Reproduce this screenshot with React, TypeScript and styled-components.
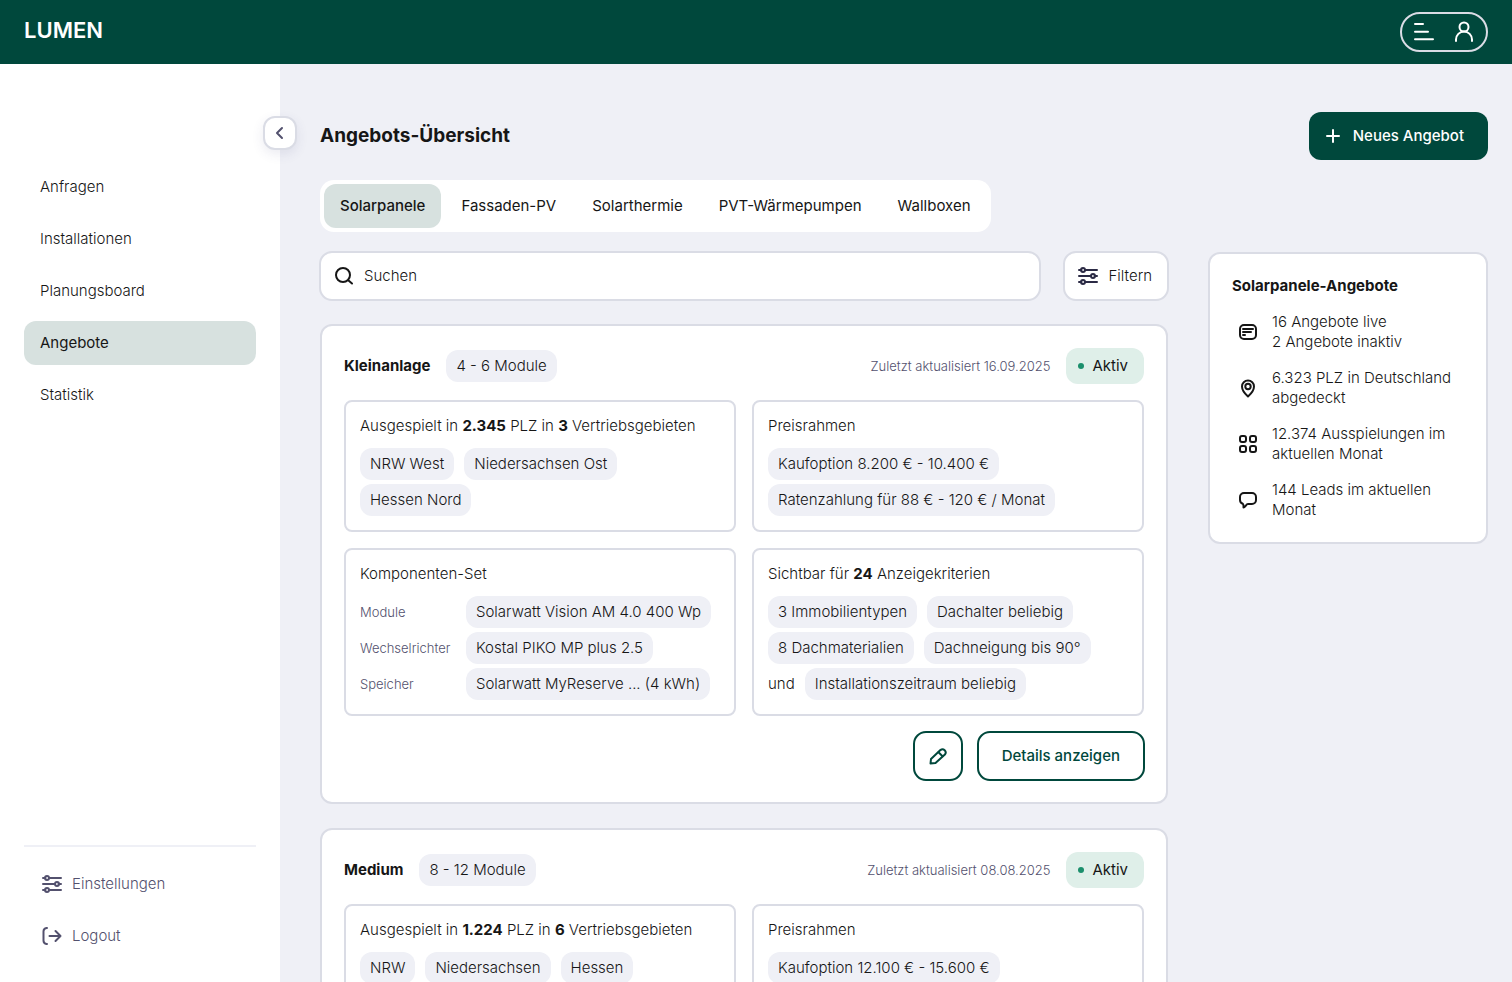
import React, { ReactNode } from 'react';
import styled, { createGlobalStyle, css } from 'styled-components';

const color = {
  brand: '#00483c',
  page: '#eff0f6',
  border: '#dadce5',
  selected: '#d7e1df',
  activeBg: '#dfefe9',
  activeDot: '#1b8f6c',
  text: '#161616',
  ink: '#2b2a45',
  muted: '#53516e',
};

const GlobalStyle = createGlobalStyle`
  *, *::before, *::after { box-sizing: border-box; }
  body {
    margin: 0;
    background: ${color.page};
    color: ${color.text};
    font-family: Inter, "Liberation Sans", sans-serif;
    font-size: 15px;
    font-weight: 300;
    line-height: 20px;
  }
  button, input { font: inherit; color: inherit; }
  button { cursor: pointer; }
  h1, h2, h3, p, ul, dl, dd { margin: 0; padding: 0; }
  ul { list-style: none; }
  strong { font-weight: 700; }
`;

const Shell = styled.div`
  display: flex;
  flex-direction: column;
  height: 100vh;
`;

const TopBar = styled.header`
  display: flex;
  flex: none;
  align-items: center;
  justify-content: space-between;
  height: 64px;
  padding: 0 24px;
  background: ${color.brand};
  color: #fff;
`;

const Brand = styled.a`
  padding-bottom: 4px;
  color: #fff;
  font-size: 22px;
  font-weight: 600;
  line-height: 24px;
  text-decoration: none;
`;

const AccountButton = styled.button`
  display: flex;
  align-items: center;
  gap: 16px;
  height: 40px;
  padding: 0 10px;
  border: 2px solid ${color.border};
  border-radius: 20px;
  background: transparent;
  color: #fff;
`;

const Body = styled.div`
  display: flex;
  flex: 1;
  min-height: 0;
`;

const Sidebar = styled.aside`
  position: relative;
  display: flex;
  flex: none;
  flex-direction: column;
  justify-content: space-between;
  width: 280px;
  padding: 101px 24px 24px;
  background: #fff;
`;

const CollapseButton = styled.button`
  position: absolute;
  top: 52px;
  right: -17px;
  display: grid;
  place-items: center;
  width: 34px;
  height: 34px;
  padding: 0;
  border: 2px solid ${color.border};
  border-radius: 12px;
  background: #fff;
  color: ${color.muted};
  box-shadow: 0 4px 12px rgba(60, 60, 120, 0.1);
`;

const NavList = styled.ul`
  display: flex;
  flex-direction: column;
  gap: 8px;
`;

const FooterNav = styled.nav`
  padding-top: 15px;
  border-top: 2px solid ${color.page};
`;

const NavLink = styled.a<{ $current?: boolean; $muted?: boolean }>`
  display: flex;
  align-items: center;
  gap: 8px;
  height: 44px;
  padding: 0 16px;
  border-radius: 12px;
  color: ${(p) => (p.$muted ? color.muted : color.text)};
  text-decoration: none;
  ${(p) =>
    p.$current &&
    css`
      background: ${color.selected};
      font-weight: 400;
    `}
`;

const Main = styled.main`
  flex: 1;
  min-width: 0;
  padding: 48px 24px 24px 40px;
  overflow-y: auto;
  scrollbar-width: none;
`;

const PageHeader = styled.div`
  display: flex;
  align-items: center;
  justify-content: space-between;
  margin-bottom: 20px;
`;

const PageTitle = styled.h1`
  font-size: 19px;
  font-weight: 700;
  line-height: 24px;
`;

const PrimaryButton = styled.button`
  display: flex;
  align-items: center;
  gap: 8px;
  height: 48px;
  padding: 0 24px 0 12px;
  border: 0;
  border-radius: 12px;
  background: ${color.brand};
  color: #fff;
  font-weight: 500;
`;

const Tabs = styled.div`
  display: inline-flex;
  gap: 4px;
  padding: 4px;
  margin-bottom: 20px;
  border-radius: 14px;
  background: #fff;
`;

const Tab = styled.button<{ $selected?: boolean }>`
  height: 44px;
  padding: 0 16px;
  border: 0;
  border-radius: 12px;
  background: ${(p) => (p.$selected ? color.selected : 'transparent')};
  font-weight: ${(p) => (p.$selected ? 500 : 400)};
`;

const Columns = styled.div`
  display: flex;
  align-items: flex-start;
  gap: 40px;
`;

const Offers = styled.div`
  display: flex;
  flex: 1;
  flex-direction: column;
  gap: 24px;
  min-width: 0;
`;

const SearchRow = styled.div`
  display: flex;
  gap: 24px;
`;

/* Controls carry a 2px border centred on their 48px box. */
const outlined = (c: string) => css`
  height: 50px;
  margin: -1px;
  border: 2px solid ${c};
  border-radius: 13px;
  background: #fff;
`;

const SearchBox = styled.label`
  display: flex;
  flex: 1;
  align-items: center;
  gap: 8px;
  padding: 0 11px;
  ${outlined(color.border)}
`;

const SearchInput = styled.input`
  flex: 1;
  min-width: 0;
  padding: 0;
  border: 0;
  outline: 0;
  background: transparent;
  &::placeholder { color: ${color.text}; opacity: 1; }
`;

const FilterButton = styled.button`
  display: flex;
  align-items: center;
  gap: 8px;
  padding: 0 15px 0 11px;
  ${outlined(color.border)}
  svg { color: ${color.ink}; }
`;

const Card = styled.article`
  padding: 22px;
  border: 2px solid ${color.border};
  border-radius: 12px;
  background: #fff;
`;

const CardHeader = styled.header`
  display: flex;
  align-items: center;
  gap: 16px;
  margin-bottom: 16px;
`;

const CardTitle = styled.h2`
  font-size: 15px;
  font-weight: 700;
  line-height: 20px;
`;

const Updated = styled.span`
  margin-left: auto;
  color: ${color.muted};
  font-size: 13px;
`;

const Status = styled.span`
  display: flex;
  align-items: center;
  gap: 8px;
  height: 36px;
  padding: 0 16px 0 12px;
  border-radius: 12px;
  background: ${color.activeBg};
  font-weight: 400;
  &::before {
    content: '';
    width: 6px;
    height: 6px;
    border-radius: 50%;
    background: ${color.activeDot};
  }
`;

const Panels = styled.div`
  display: grid;
  grid-template-columns: repeat(2, minmax(0, 1fr));
  gap: 16px;
`;

const Panel = styled.section`
  padding: 14px;
  border: 2px solid ${color.border};
  border-radius: 8px;
`;

const PanelTitle = styled.h3`
  margin-bottom: 12px;
  font-size: 15px;
  font-weight: 300;
  line-height: 20px;
`;

const Chips = styled.div`
  display: flex;
  flex-wrap: wrap;
  align-items: center;
  gap: 4px 10px;
`;

const LastChip = styled.div`
  display: flex;
  align-items: center;
  gap: 10px;
`;

const Chip = styled.span`
  display: inline-flex;
  align-items: center;
  height: 32px;
  padding: 0 10px;
  border-radius: 12px;
  background: ${color.page};
  white-space: nowrap;
`;

const Parts = styled.dl`
  display: grid;
  grid-template-columns: 106px 1fr;
  align-items: center;
  row-gap: 4px;
`;

const PartLabel = styled.dt`
  color: ${color.muted};
  font-size: 13px;
`;

const PartValue = styled.dd`
  display: flex;
`;

const Actions = styled.footer`
  display: flex;
  justify-content: flex-end;
  gap: 16px;
  margin-top: 16px;
`;

const OutlineButton = styled.button<{ $square?: boolean }>`
  display: grid;
  place-items: center;
  width: ${(p) => (p.$square ? '50px' : 'auto')};
  padding: ${(p) => (p.$square ? '0' : '0 23px')};
  color: ${color.brand};
  font-weight: 500;
  ${outlined(color.brand)}
`;

const Summary = styled.aside`
  flex: none;
  width: 280px;
  padding: 22px;
  border: 2px solid ${color.border};
  border-radius: 12px;
  background: #fff;
`;

const SummaryList = styled.ul`
  display: flex;
  flex-direction: column;
  gap: 16px;
  margin-top: 16px;
`;

const SummaryItem = styled.li`
  display: flex;
  align-items: center;
  gap: 8px;
  svg { margin: 0 4px; }
`;

const SummaryText = styled.span`
  flex: 1;
  white-space: pre-line;
`;

const IconSvg = styled.svg`
  flex: none;
  width: 24px;
  height: 24px;
`;

const Icon = ({ children }: { children: ReactNode }) => (
  <IconSvg
    viewBox="0 0 24 24"
    fill="none"
    stroke="currentColor"
    strokeWidth={2}
    strokeLinecap="round"
    strokeLinejoin="round"
    aria-hidden="true"
  >
    {children}
  </IconSvg>
);

const MenuIcon = () => (
  <Icon><path d="M3 4h8M3 11.7h13M3 19.3h18" /></Icon>
);
const UserIcon = () => (
  <Icon><circle cx="12" cy="7" r="4.500" /><path d="M4 21v-1.500a8 8 0 0 1 16 0V21" /></Icon>
);
const ChevronIcon = () => (
  <Icon><path d="M14 7l-5 5 5 5" /></Icon>
);
const SlidersIcon = () => (
  <Icon>
    <path d="M3 6h2.500M9.500 6H21M3 12h11.500M18.500 12H21M3 18h2.500M9.500 18H21" />
    <circle cx="7" cy="6" r="2" />
    <circle cx="17" cy="12" r="2" />
    <circle cx="7" cy="18" r="2" />
  </Icon>
);
const LogoutIcon = () => (
  <Icon><path d="M7 4H6.500A3.500 3.500 0 0 0 3.500 7.500v9A3.500 3.500 0 0 0 6.500 20H7M9.500 12h11M15.500 7l5 5-5 5" /></Icon>
);
const SearchIcon = () => (
  <Icon><circle cx="11" cy="11" r="7" /><path d="M16.500 16.500L20 19.500" /></Icon>
);
const PlusIcon = () => (
  <Icon><path d="M12 6v12M6 12h12" /></Icon>
);
const PencilIcon = () => (
  <Icon>
    <path d="M4.500 19.500l.5-4.500 9.400-8.900a3.200 3.200 0 0 1 4.500 4.500L9.500 19z" />
    <path d="M12.500 8.300l4 4" />
  </Icon>
);
const ListIcon = () => (
  <Icon><rect x="4" y="5" width="16" height="14" rx="4" /><path d="M7 9h10M7 12h8M7 15h2" /></Icon>
);
const PinIcon = () => (
  <Icon>
    <path d="M12 20.500c-3-2.700-6-6-6-10a6 6 0 0 1 12 0c0 4-3 7.300-6 10z" />
    <circle cx="12" cy="10.500" r="2.700" />
  </Icon>
);
const GridIcon = () => (
  <Icon>
    <rect x="4" y="4" width="6" height="6" rx="2" />
    <rect x="14" y="4" width="6" height="6" rx="2" />
    <rect x="4" y="14" width="6" height="6" rx="2" />
    <rect x="14" y="14" width="6" height="6" rx="2" />
  </Icon>
);
const BubbleIcon = () => (
  <Icon><path d="M8 5h8a4 4 0 0 1 4 4v3a4 4 0 0 1-4 4h-4c-2 0-2.700 3.500-4.500 3.500 0-1.500.3-2.800-.7-3.700C5.200 15.200 4 13.800 4 12V9a4 4 0 0 1 4-4z" /></Icon>
);

type Offer = {
  name: string;
  modules: string;
  updated: string;
  plz: string;
  regionCount: number;
  regions: string[];
  prices: string[];
  details?: {
    parts: [string, string][];
    criteriaCount: number;
    criteria: string[];
    lastCriterion: string;
  };
};

const offers: Offer[] = [
  {
    name: 'Kleinanlage',
    modules: '4 - 6 Module',
    updated: '16.09.2025',
    plz: '2.345',
    regionCount: 3,
    regions: ['NRW West', 'Niedersachsen Ost', 'Hessen Nord'],
    prices: ['Kaufoption 8.200 € - 10.400 €', 'Ratenzahlung für 88 € - 120 € / Monat'],
    details: {
      parts: [
        ['Module', 'Solarwatt Vision AM 4.0 400 Wp'],
        ['Wechselrichter', 'Kostal PIKO MP plus 2.5'],
        ['Speicher', 'Solarwatt MyReserve ... (4 kWh)'],
      ],
      criteriaCount: 24,
      criteria: ['3 Immobilientypen', 'Dachalter beliebig', '8 Dachmaterialien', 'Dachneigung bis 90°'],
      lastCriterion: 'Installationszeitraum beliebig',
    },
  },
  {
    name: 'Medium',
    modules: '8 - 12 Module',
    updated: '08.08.2025',
    plz: '1.224',
    regionCount: 6,
    regions: ['NRW', 'Niedersachsen', 'Hessen'],
    prices: ['Kaufoption 12.100 € - 15.600 €'],
  },
];

const OfferCard = ({ offer }: { offer: Offer }) => (
  <Card>
    <CardHeader>
      <CardTitle>{offer.name}</CardTitle>
      <Chip>{offer.modules}</Chip>
      <Updated>Zuletzt aktualisiert {offer.updated}</Updated>
      <Status>Aktiv</Status>
    </CardHeader>
    <Panels>
      <Panel>
        <PanelTitle>
          Ausgespielt in <strong>{offer.plz}</strong> PLZ in <strong>{offer.regionCount}</strong> Vertriebsgebieten
        </PanelTitle>
        <Chips>{offer.regions.map((r) => <Chip key={r}>{r}</Chip>)}</Chips>
      </Panel>
      <Panel>
        <PanelTitle>Preisrahmen</PanelTitle>
        <Chips>{offer.prices.map((p) => <Chip key={p}>{p}</Chip>)}</Chips>
      </Panel>
      {offer.details && (
        <>
          <Panel>
            <PanelTitle>Komponenten-Set</PanelTitle>
            <Parts>
              {offer.details.parts.map(([label, value]) => (
                <React.Fragment key={label}>
                  <PartLabel>{label}</PartLabel>
                  <PartValue><Chip>{value}</Chip></PartValue>
                </React.Fragment>
              ))}
            </Parts>
          </Panel>
          <Panel>
            <PanelTitle>
              Sichtbar für <strong>{offer.details.criteriaCount}</strong> Anzeigekriterien
            </PanelTitle>
            <Chips>
              {offer.details.criteria.map((c) => <Chip key={c}>{c}</Chip>)}
              <LastChip>und <Chip>{offer.details.lastCriterion}</Chip></LastChip>
            </Chips>
          </Panel>
        </>
      )}
    </Panels>
    {offer.details && (
      <Actions>
        <OutlineButton type="button" $square aria-label={`${offer.name} bearbeiten`}><PencilIcon /></OutlineButton>
        <OutlineButton type="button">Details anzeigen</OutlineButton>
      </Actions>
    )}
  </Card>
);

const navItems = ['Anfragen', 'Installationen', 'Planungsboard', 'Angebote', 'Statistik'];
const tabItems = ['Solarpanele', 'Fassaden-PV', 'Solarthermie', 'PVT-Wärmepumpen', 'Wallboxen'];
const summaryItems = [
  { icon: <ListIcon />, text: '16 Angebote live\n2 Angebote inaktiv' },
  { icon: <PinIcon />, text: '6.323 PLZ in Deutschland abgedeckt' },
  { icon: <GridIcon />, text: '12.374 Ausspielungen im aktuellen Monat' },
  { icon: <BubbleIcon />, text: '144 Leads im aktuellen Monat' },
];

export default function App() {
  return (
    <>
      <GlobalStyle />
      <Shell>
        <TopBar>
          <Brand href="#">LUMEN</Brand>
          <AccountButton type="button" aria-label="Konto">
            <MenuIcon />
            <UserIcon />
          </AccountButton>
        </TopBar>
        <Body>
          <Sidebar>
            <CollapseButton type="button" aria-label="Seitenleiste einklappen"><ChevronIcon /></CollapseButton>
            <nav>
              <NavList>
                {navItems.map((item) => (
                  <li key={item}>
                    <NavLink href="#" $current={item === 'Angebote'}>{item}</NavLink>
                  </li>
                ))}
              </NavList>
            </nav>
            <FooterNav>
              <NavList>
                <li><NavLink href="#" $muted><SlidersIcon />Einstellungen</NavLink></li>
                <li><NavLink href="#" $muted><LogoutIcon />Logout</NavLink></li>
              </NavList>
            </FooterNav>
          </Sidebar>
          <Main>
            <PageHeader>
              <PageTitle>Angebots-Übersicht</PageTitle>
              <PrimaryButton type="button"><PlusIcon />Neues Angebot</PrimaryButton>
            </PageHeader>
            <Tabs role="tablist">
              {tabItems.map((tab, i) => (
                <Tab key={tab} type="button" role="tab" aria-selected={i === 0} $selected={i === 0}>{tab}</Tab>
              ))}
            </Tabs>
            <Columns>
              <Offers>
                <SearchRow>
                  <SearchBox>
                    <SearchIcon />
                    <SearchInput type="search" placeholder="Suchen" aria-label="Suchen" />
                  </SearchBox>
                  <FilterButton type="button"><SlidersIcon />Filtern</FilterButton>
                </SearchRow>
                {offers.map((offer) => <OfferCard key={offer.name} offer={offer} />)}
              </Offers>
              <Summary>
                <CardTitle>Solarpanele-Angebote</CardTitle>
                <SummaryList>
                  {summaryItems.map(({ icon, text }) => (
                    <SummaryItem key={text}>
                      {icon}
                      <SummaryText>{text}</SummaryText>
                    </SummaryItem>
                  ))}
                </SummaryList>
              </Summary>
            </Columns>
          </Main>
        </Body>
      </Shell>
    </>
  );
}
